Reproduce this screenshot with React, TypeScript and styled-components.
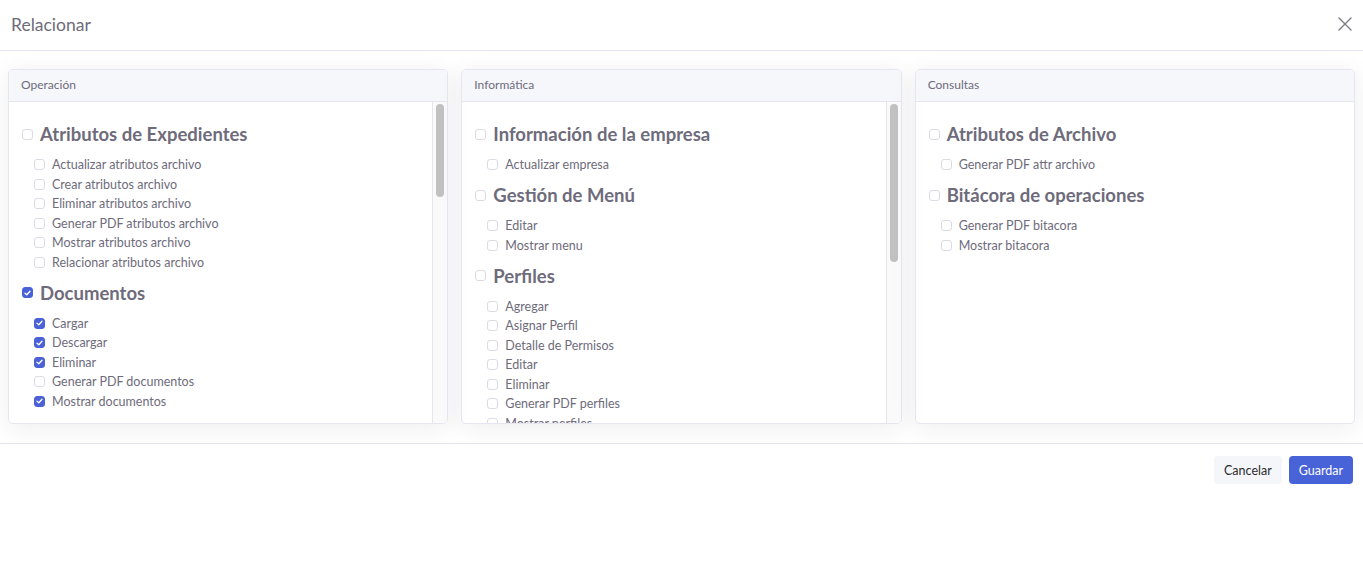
import { createGlobalStyle } from 'styled-components';
import styled from 'styled-components';

type Group = { title: string; items: { label: string; checked?: boolean }[]; checked?: boolean };
type Section = { name: string; thumb?: number; groups: Group[] };

const sections: Section[] = [
  {
    name: 'Operación',
    thumb: 93,
    groups: [
      {
        title: 'Atributos de Expedientes',
        items: [
          { label: 'Actualizar atributos archivo' },
          { label: 'Crear atributos archivo' },
          { label: 'Eliminar atributos archivo' },
          { label: 'Generar PDF atributos archivo' },
          { label: 'Mostrar atributos archivo' },
          { label: 'Relacionar atributos archivo' },
        ],
      },
      {
        title: 'Documentos',
        checked: true,
        items: [
          { label: 'Cargar', checked: true },
          { label: 'Descargar', checked: true },
          { label: 'Eliminar', checked: true },
          { label: 'Generar PDF documentos' },
          { label: 'Mostrar documentos', checked: true },
        ],
      },
    ],
  },
  {
    name: 'Informática',
    thumb: 158,
    groups: [
      { title: 'Información de la empresa', items: [{ label: 'Actualizar empresa' }] },
      { title: 'Gestión de Menú', items: [{ label: 'Editar' }, { label: 'Mostrar menu' }] },
      {
        title: 'Perfiles',
        items: [
          { label: 'Agregar' },
          { label: 'Asignar Perfil' },
          { label: 'Detalle de Permisos' },
          { label: 'Editar' },
          { label: 'Eliminar' },
          { label: 'Generar PDF perfiles' },
          { label: 'Mostrar perfiles' },
        ],
      },
    ],
  },
  {
    name: 'Consultas',
    groups: [
      { title: 'Atributos de Archivo', items: [{ label: 'Generar PDF attr archivo' }] },
      {
        title: 'Bitácora de operaciones',
        items: [{ label: 'Generar PDF bitacora' }, { label: 'Mostrar bitacora' }],
      },
    ],
  },
];

const GlobalStyle = createGlobalStyle`
  html, body {
    margin: 0;
    background: #ffffff;
    font-family: Lato, "Open Sans", sans-serif;
    color: #6e6b7b;
  }
  * { box-sizing: border-box; }
`;

const Modal = styled.div`
  width: 100%;
  background: #fff;
`;

const Header = styled.div`
  height: 51px;
  display: flex;
  align-items: center;
  justify-content: space-between;
  padding: 0 10px 2px 11px;
  border-bottom: 1px solid #e4e3ef;
`;

const Title = styled.h5`
  margin: 0;
  font-size: 17.5px;
  font-weight: 400;
  color: #6e6b7b;
`;

const CloseButton = styled.button`
  border: none;
  background: none;
  padding: 0;
  width: 16px;
  height: 16px;
  display: flex;
  align-items: center;
  justify-content: center;
  cursor: pointer;
`;

const Body = styled.div`
  display: grid;
  grid-template-columns: repeat(3, 1fr);
  gap: 13px;
  padding: 18px 8px 19px;
  border-bottom: 1px solid #e4e3ef;
`;

const Card = styled.div`
  height: 355px;
  border: 1px solid #e6e5f0;
  border-radius: 5px;
  display: flex;
  flex-direction: column;
  overflow: hidden;
  box-shadow: 0 4px 24px 0 rgba(34, 41, 47, 0.08);
`;

const CardHeader = styled.div`
  height: 32px;
  flex: none;
  display: flex;
  align-items: center;
  padding: 0 12px 2px;
  background: #f6f7fb;
  border-bottom: 1px solid #e6e5f0;
  font-size: 12px;
  color: #6e6b7b;
`;

const CardBody = styled.div`
  flex: 1;
  min-height: 0;
  display: flex;
`;

const Content = styled.div`
  flex: 1;
  min-width: 0;
  overflow: hidden;
  padding: 20px 13px 10px;
`;

const Track = styled.div`
  flex: none;
  width: 15px;
  background: #fafafa;
  border-left: 1px solid #e6e6ea;
  padding: 2px 3px 0 3px;
`;

const Thumb = styled.div`
  width: 8px;
  background: #c1c1c1;
  border-radius: 4px;
`;

const GroupBlock = styled.div`
  margin-bottom: 8.5px;
`;

const Row = styled.label<{ $sub?: boolean }>`
  display: flex;
  align-items: center;
  gap: 7px;
  padding-left: ${(p) => (p.$sub ? '12px' : '0')};
  height: ${(p) => (p.$sub ? '19.5px' : '24px')};
  margin-bottom: ${(p) => (p.$sub ? '0' : '9px')};
  font-size: ${(p) => (p.$sub ? '12.5px' : '18.5px')};
  font-weight: ${(p) => (p.$sub ? 400 : 700)};
  color: #6e6b7b;
  white-space: nowrap;
`;

const Box = styled.span<{ $checked?: boolean }>`
  flex: none;
  width: 11px;
  height: 11px;
  border-radius: 3px;
  border: 1px solid ${(p) => (p.$checked ? '#4a62d6' : '#dcdbe4')};
  background: ${(p) => (p.$checked ? '#4a62d6' : '#fff')};
  display: flex;
  align-items: center;
  justify-content: center;
`;

const Footer = styled.div`
  display: flex;
  justify-content: flex-end;
  gap: 7px;
  padding: 12px 10px;
`;

const Button = styled.button<{ $primary?: boolean }>`
  height: 28px;
  padding: 0 10px;
  border: none;
  border-radius: 4px;
  font-family: Lato, "Open Sans", sans-serif;
  font-size: 12.5px;
  background: ${(p) => (p.$primary ? '#4862d8' : '#f5f6fa')};
  color: ${(p) => (p.$primary ? '#ffffff' : '#2b2b2b')};
  cursor: pointer;
`;

function Check({ checked }: { checked?: boolean }) {
  return (
    <Box $checked={checked}>
      {checked && (
        <svg width="7" height="6" viewBox="0 0 7 6">
          <path d="M1 3.2 L2.8 4.8 L6 1.2" fill="none" stroke="#fff" strokeWidth="1.3" strokeLinecap="round" strokeLinejoin="round" />
        </svg>
      )}
    </Box>
  );
}

export default function App() {
  return (
    <>
      <GlobalStyle />
      <Modal>
        <Header>
          <Title>Relacionar</Title>
          <CloseButton aria-label="Cerrar">
            <svg width="14" height="14" viewBox="0 0 14 14">
              <path d="M1 1 L13 13 M13 1 L1 13" stroke="#7d7d85" strokeWidth="1.4" strokeLinecap="round" />
            </svg>
          </CloseButton>
        </Header>
        <Body>
          {sections.map((section) => (
            <Card key={section.name}>
              <CardHeader>{section.name}</CardHeader>
              <CardBody>
                <Content>
                  {section.groups.map((group) => (
                    <GroupBlock key={group.title}>
                      <Row>
                        <Check checked={group.checked} />
                        {group.title}
                      </Row>
                      {group.items.map((item) => (
                        <Row $sub key={item.label}>
                          <Check checked={item.checked} />
                          {item.label}
                        </Row>
                      ))}
                    </GroupBlock>
                  ))}
                </Content>
                {section.thumb && (
                  <Track>
                    <Thumb style={{ height: section.thumb }} />
                  </Track>
                )}
              </CardBody>
            </Card>
          ))}
        </Body>
        <Footer>
          <Button>Cancelar</Button>
          <Button $primary>Guardar</Button>
        </Footer>
      </Modal>
    </>
  );
}
